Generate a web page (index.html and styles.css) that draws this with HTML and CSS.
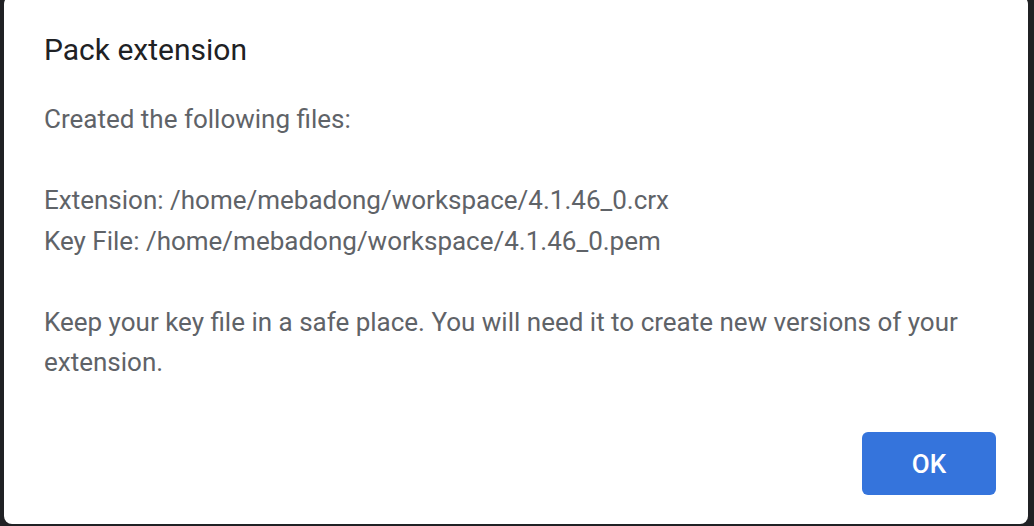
FILE: index.html
```html
<!DOCTYPE html>
<html lang="en">

<head>
    <meta charset="UTF-8">
    <meta name="viewport" content="width=device-width, initial-scale=1.0">
    <title>Pack extension</title>
    <link rel="stylesheet" href="styles.css">
</head>

<body>

    <!-- Pack extension result dialog -->
    <div class="dialog">
        <div class="dialog-title">Pack extension</div>

        <div class="dialog-body">
            <p>Created the following files:</p>
            <p>Extension: /home/mebadong/workspace/4.1.46_0.crx<br>Key File: /home/mebadong/workspace/4.1.46_0.pem</p>
            <p>Keep your key file in a safe place. You will need it to create new versions of your extension.</p>
        </div>

        <div class="dialog-footer">
            <button class="ok-button">OK</button>
        </div>
    </div>

</body>

</html>
```

FILE: styles.css
```css
body {
    font-family: Roboto, "Liberation Sans", sans-serif;
    margin: 0;
    background-color: #202124;
    height: 526px;
    overflow: hidden;
}

.dialog {
    width: 1024px;
    height: 528px;
    margin: -4px 0 0 4px;
    background-color: #ffffff;
    border-radius: 8px;
    box-sizing: border-box;
    padding: 0 32px 29px 40px;
    display: flex;
    flex-direction: column;
}

.dialog-title {
    font-size: 30px;
    color: #202124;
    padding-top: 37px;
    line-height: 34px;
}

.dialog-body {
    flex: 1;
    font-size: 26px;
    color: #5f6368;
    line-height: 40.5px;
    padding-top: 32px;
}

.dialog-body p {
    margin: 0 0 40.5px 0;
}

.dialog-footer {
    display: flex;
    justify-content: flex-end;
}

.ok-button {
    width: 134px;
    height: 63px;
    background-color: #3574dc;
    color: #ffffff;
    border: none;
    border-radius: 6px;
    font-family: Roboto, "Liberation Sans", sans-serif;
    font-size: 26px;
    font-weight: 500;
}
```
